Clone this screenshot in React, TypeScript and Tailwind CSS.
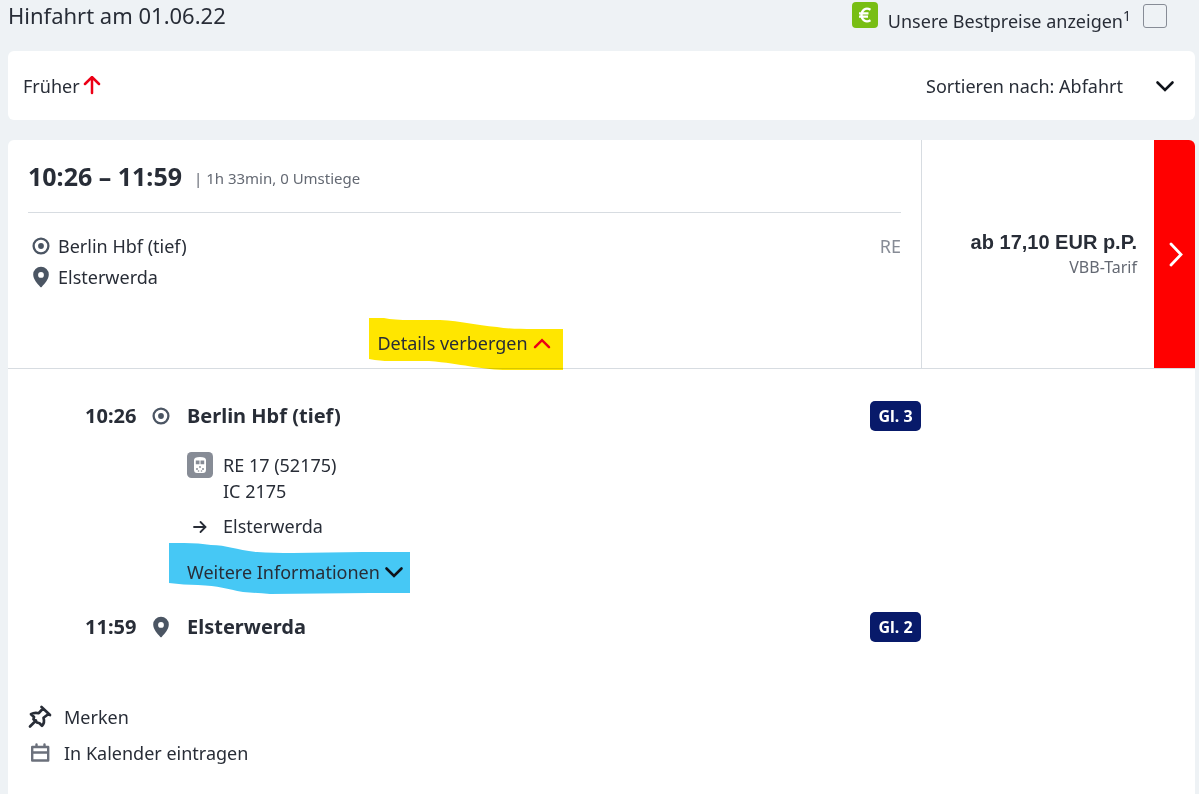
import React, { useState } from 'react';

const journey = {
  departure: '10:26',
  arrival: '11:59',
  duration: '1h 33min, 0 Umstiege',
  from: 'Berlin Hbf (tief)',
  to: 'Elsterwerda',
  product: 'RE',
};

function StartIcon() {
  return (
    <svg className="w-[18px] h-[18px] shrink-0" viewBox="0 0 18 18" fill="none" aria-hidden="true">
      <circle cx="9" cy="9" r="7.4" stroke="#4b5563" strokeWidth="2.3" />
      <circle cx="9" cy="9" r="2.9" fill="#4b5563" />
    </svg>
  );
}

function PinIcon() {
  return (
    <svg className="w-[18px] h-[22px] shrink-0" viewBox="0 0 18 22" aria-hidden="true">
      <path
        fill="#4b5563"
        fillRule="evenodd"
        d="M9 .8a7.8 7.8 0 0 0-7.8 7.8c0 4.6 4 9 7.1 12.4q.7.7 1.4 0c3.1-3.4 7.1-7.800 7.100-12.400A7.800 7.800 0 0 0 9 .8Zm0 5.200a2.900 2.900 0 1 1 0 5.800 2.900 2.900 0 0 1 0-5.800Z"
      />
    </svg>
  );
}

function ChevronDown() {
  return (
    <svg className="w-5 h-5 shrink-0" viewBox="0 0 20 20" fill="none" aria-hidden="true">
      <path d="m2.500 6.500 7.500 7.500 7.500-7.500" stroke="#0f131a" strokeWidth="2.600" strokeLinecap="round" />
    </svg>
  );
}

function TrainIcon() {
  return (
    <svg className="w-[26px] h-[26px] shrink-0" viewBox="0 0 26 26" aria-hidden="true">
      <rect width="26" height="26" rx="4.500" fill="#878c96" />
      <path d="M7 8q0-3 6-3t6 3v9.500q0 3.500-3 3.500h-6q-3 0-3-3.500Z" fill="#fff" />
      <path d="M8.800 8.500h3.700v3.800H8.800zM13.500 8.500h3.700v3.800h-3.700z" fill="#878c96" />
      <circle cx="13" cy="15" r=".9" fill="#878c96" />
      <circle cx="10" cy="17" r="1" fill="#878c96" />
      <circle cx="16" cy="17" r="1" fill="#878c96" />
      <circle cx="11.500" cy="19" r=".8" fill="#878c96" />
      <circle cx="14.500" cy="19" r=".8" fill="#878c96" />
    </svg>
  );
}

function Track({ children }: { children: React.ReactNode }) {
  return (
    <span className="w-[51px] h-[30px] flex items-center justify-center rounded-[5px] bg-[#081a6a] text-white text-base leading-5 font-bold">
      {children}
    </span>
  );
}

export default function App() {
  const [bestPrice, setBestPrice] = useState(false);

  return (
    <div className="min-h-screen flex flex-col bg-[#eef2f5] pl-2 pr-1 font-['Noto_Sans',sans-serif] text-lg leading-[26px] text-[#282d37]">
      <header className="h-[51px] flex items-start justify-between pr-7">
        <h1 className="text-[22px] leading-[30px]">Hinfahrt am 01.06.22</h1>
        <div className="flex items-start pt-[2px]">
          <svg className="w-[26px] h-[26px] mr-[10px]" viewBox="0 0 26 26" fill="none" aria-hidden="true">
            <rect width="26" height="26" rx="4" fill="#78be14" />
            <path d="M18.500 7.700C13.800 5 9.500 8 9.500 13S13.800 21 18.500 18.300M7 11.300h9.500M7 14.700h9" stroke="#fff" strokeWidth="2.300" />
          </svg>
          <label htmlFor="bestpreise" className="pt-[6px]">
            Unsere Bestpreise anzeigen<sup className="text-sm leading-none">1</sup>
          </label>
          <input
            id="bestpreise"
            type="checkbox"
            checked={bestPrice}
            onChange={(e) => setBestPrice(e.target.checked)}
            className="appearance-none w-6 h-6 mt-[2px] ml-3 rounded-[3px] border border-[#878c96] checked:bg-[#282d37]"
          />
        </div>
      </header>

      {/* Earlier connections / sorting */}
      <div className="h-[69px] flex items-center justify-between pl-[15px] pr-5 bg-white rounded-md">
        <button type="button" className="flex items-center gap-[3px]">
          Früher
          <svg className="w-[18px] h-5" viewBox="0 0 18 20" fill="none" aria-hidden="true">
            <path d="M9 17V2M2 8l7-7 7 7" stroke="#ec0016" strokeWidth="2.500" strokeLinecap="round" />
          </svg>
        </button>
        <button type="button" className="flex items-center gap-8">
          Sortieren nach: Abfahrt
          <ChevronDown />
        </button>
      </div>

      <article className="flex-1 mt-5 bg-white rounded-t-md overflow-hidden">
        {/* Summary */}
        <section className="flex h-[229px] border-b border-[#d7dce1]">
          <div className="flex-1 flex flex-col px-5 border-r border-[#d7dce1]">
            <div className="h-[73px] flex items-center gap-3 border-b border-[#d7dce1]">
              <h2 className="text-[25px] font-bold">
                {journey.departure} – {journey.arrival}
              </h2>
              <span className="pt-1 text-[15px] text-[#646973]">| {journey.duration}</span>
            </div>
            <div className="flex justify-between pt-5 pl-1">
              <ul className="flex flex-col gap-[5px]">
                <li className="flex items-center gap-2">
                  <StartIcon />
                  {journey.from}
                </li>
                <li className="flex items-center gap-2">
                  <PinIcon />
                  {journey.to}
                </li>
              </ul>
              <span className="text-[#878c96]">{journey.product}</span>
            </div>
            <button type="button" className="relative self-center flex items-center gap-1 mt-10">
              <svg className="absolute -left-2 -top-3 w-[194px] h-[53px] mix-blend-multiply" viewBox="0 0 194 53" aria-hidden="true">
                <path d="M0 0 15 0Q25 2 42 2h29c22 1 35 5 57 7 12 2 24 2 36 2h30v41h-60C109 51 94 46 60 43H20Q12 43 0 41Z" fill="#ffe600" />
              </svg>
              <span className="relative">Details verbergen</span>
              <svg className="relative w-5 h-5" viewBox="0 0 20 20" fill="none" aria-hidden="true">
                <path d="m3 14.200 7-7 7 7" stroke="#ec0016" strokeWidth="2.500" strokeLinecap="round" />
              </svg>
            </button>
          </div>
          <div className="w-[232px] flex flex-col items-end justify-center pr-[17px]">
            <strong className="font-['Liberation_Sans',sans-serif] text-xl leading-[26px]">ab 17,10 EUR p.P.</strong>
            <span className="text-base text-[#646973]">VBB-Tarif</span>
          </div>
          <button type="button" aria-label="Zur Angebotsauswahl" className="w-[41px] flex items-center justify-center bg-[#ff0000]">
            <svg className="w-6 h-7" viewBox="0 0 24 28" fill="none" aria-hidden="true">
              <path d="m8 4 10 10.500L8 25" stroke="#fff" strokeWidth="2.800" strokeLinecap="round" />
            </svg>
          </button>
        </section>

        {/* Journey details */}
        <section className="pt-8 pl-[77px] pr-[274px]">
          <div className="flex items-center text-xl font-bold">
            <span className="w-[67px]">{journey.departure}</span>
            <StartIcon />
            <h3 className="flex-1 pl-[17px]">{journey.from}</h3>
            <Track>Gl. 3</Track>
          </div>
          <div className="pl-[102px]">
            <div className="flex items-start gap-[10px] pt-[21px]">
              <TrainIcon />
              <p>
                RE 17 (52175)
                <br />
                IC 2175
              </p>
            </div>
            <div className="flex items-center gap-[10px] mt-[9px]">
              <svg className="w-[26px] h-[26px]" viewBox="0 0 26 26" fill="none" aria-hidden="true">
                <path d="M7 14h11M13.500 9l5 5-5 5" stroke="#282d37" strokeWidth="1.800" strokeLinecap="round" />
              </svg>
              {journey.to}
            </div>
            <button type="button" className="relative flex items-center gap-1 mt-5">
              <svg className="absolute -left-[18px] -top-4 w-[241px] h-[51px]" viewBox="0 0 241 51" aria-hidden="true">
                <path d="M0 0h15q15 0 27 2c16 0 25 5 46 7q16 1 36 1l70-1h47v41h-40l-100 1q-14-1-27-2C58 46 50 43 29 42Q15 42 0 40Z" fill="#46c8f5" />
              </svg>
              <span className="relative">Weitere Informationen</span>
              <span className="relative">
                <ChevronDown />
              </span>
            </button>
          </div>
          <div className="flex items-center mt-[27px] text-xl font-bold">
            <span className="w-[67px]">{journey.arrival}</span>
            <PinIcon />
            <h3 className="flex-1 pl-[17px]">{journey.to}</h3>
            <Track>Gl. 2</Track>
          </div>
        </section>

        <footer className="flex flex-col items-start gap-[10px] pt-[62px] pb-7 pl-5">
          <button type="button" className="flex items-center gap-3">
            <svg className="w-6 h-6" viewBox="0 0 24 24" fill="none" aria-hidden="true">
              <path
                d="m13.500 2 8.500 8M15 3.500 10.800 8.200Q6.500 7 3 9.200L6 12 5.500 14.200 9 17.500 11.500 18.200 14 20.800Q17 17.500 15.500 12.800L20.500 9M8 15.500 2 21.500"
                stroke="#282d37"
                strokeWidth="2.700"
                strokeLinecap="round"
                strokeLinejoin="round"
              />
            </svg>
            Merken
          </button>
          <button type="button" className="flex items-center gap-3">
            <svg className="w-6 h-6" viewBox="0 0 24 24" fill="none" aria-hidden="true">
              <path d="M4.200 6h16v13.500h-16zM4.200 11.500h16M8.500 3.500v2M16.500 3.500v2" stroke="#6b707b" strokeWidth="2.400" strokeLinecap="round" strokeLinejoin="round" />
            </svg>
            In Kalender eintragen
          </button>
        </footer>
      </article>
    </div>
  );
}
